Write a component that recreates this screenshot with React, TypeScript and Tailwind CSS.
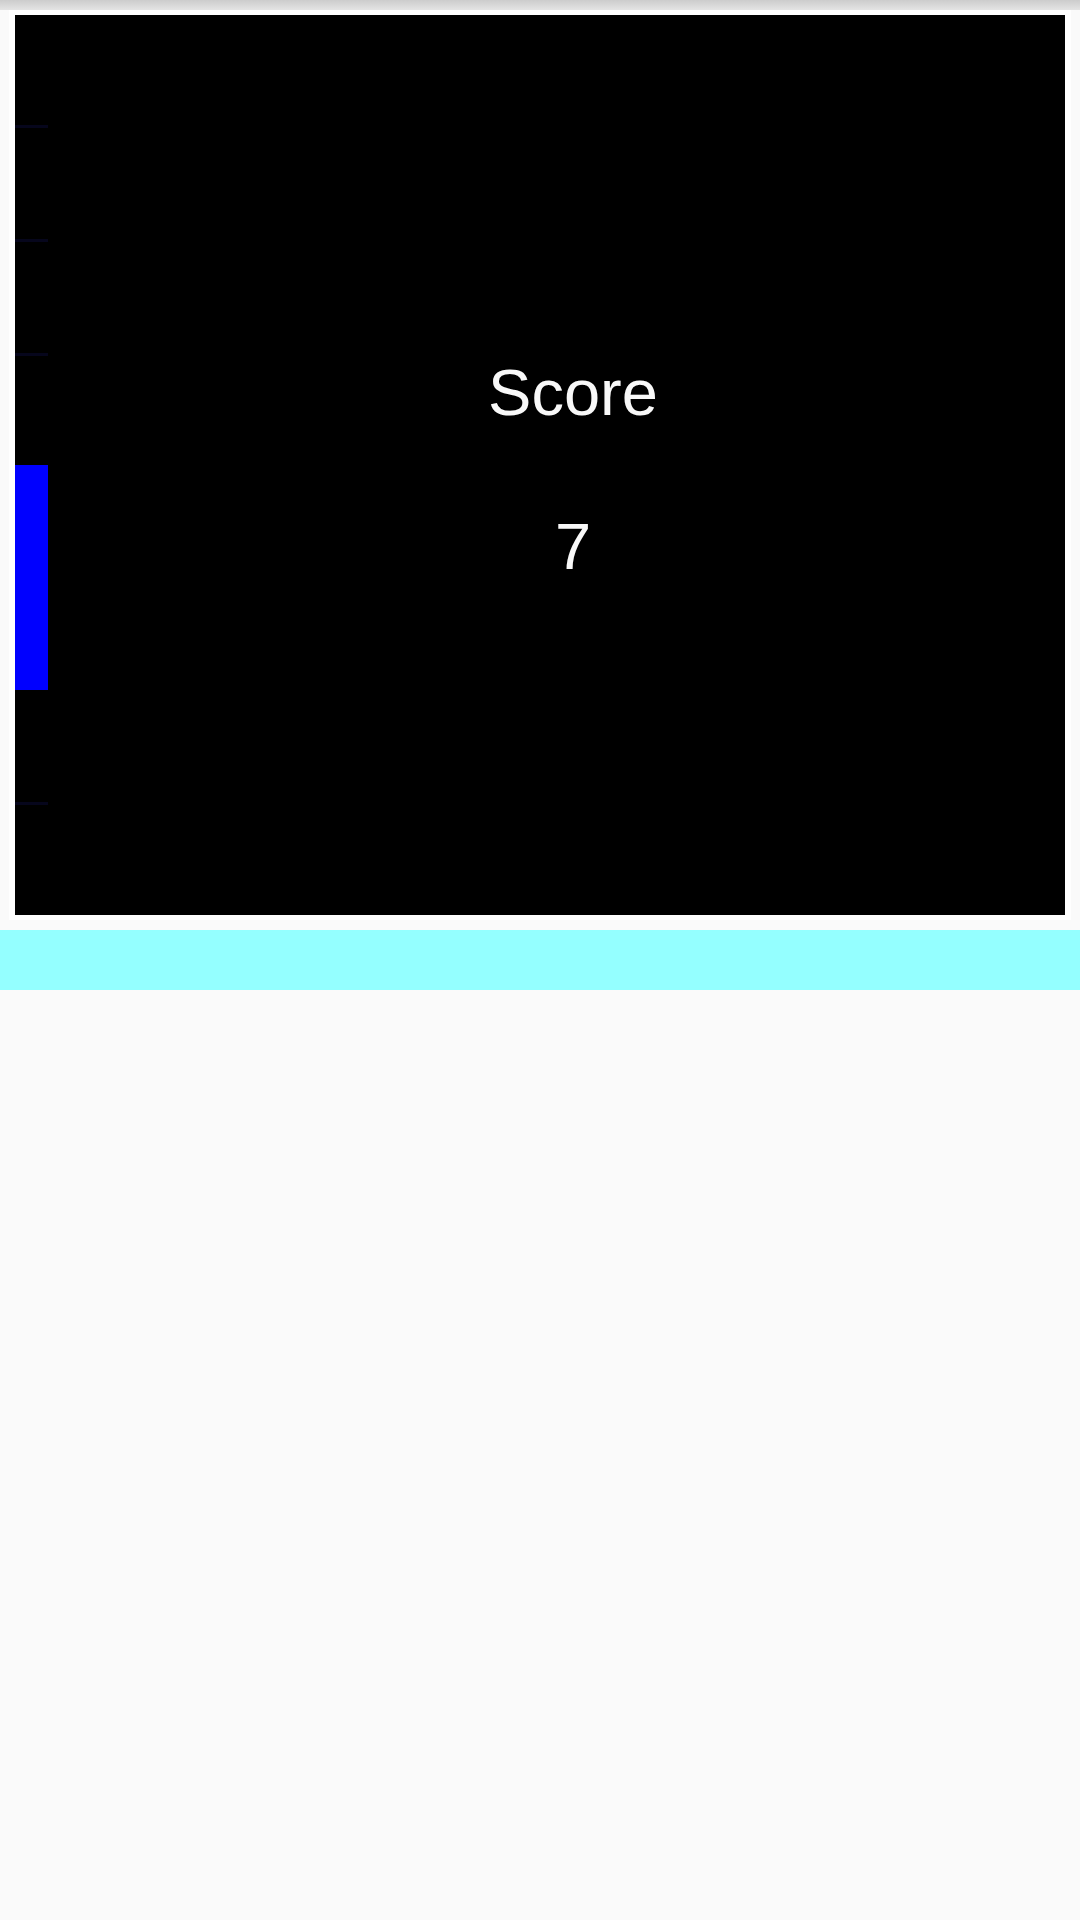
import React from "react";

export default function App() {
  const ghostLines = [110, 224, 338, 787];
  return (
    <div
      className="min-h-[1920px] w-full bg-[#fafafa] flex flex-col"
      style={{ fontFamily: '"Liberation Sans", Arial, sans-serif' }}
    >
      <div className="h-[10px] bg-gradient-to-b from-[#cccccc] to-[#e4e4e4]" />
      <div className="px-[9px]">
        <div className="bg-white px-[6px] pt-[5px] pb-[5px]">
          <div className="relative h-[900px] bg-black overflow-hidden">
            {ghostLines.map((t) => (
              <div
                key={t}
                className="absolute left-0 w-[33px] h-[3px] bg-[#06061c]"
                style={{ top: t }}
              />
            ))}
            <div className="absolute left-0 top-[450px] w-[33px] h-[225px] bg-[#0000ff]" />
            <div className="flex flex-col items-center pl-[66px] pt-[345px] gap-[89px] text-[#f8f8f8] text-[65px] leading-none">
              <div>Score</div>
              <div>7</div>
            </div>
          </div>
        </div>
      </div>
      <div className="mt-[10px] h-[60px] bg-[#94ffff]" />
    </div>
  );
}
